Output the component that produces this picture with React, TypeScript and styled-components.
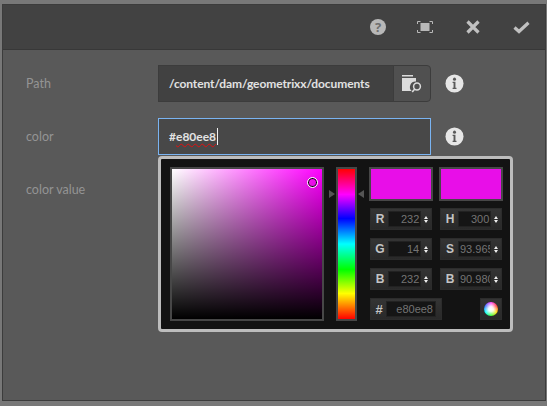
import React from "react";
import styled, { createGlobalStyle } from "styled-components";

const Global = createGlobalStyle`
  html, body { margin: 0; padding: 0; background: #787878; }
  body { width: 547px; height: 406px; overflow: hidden; font-family: Lato, "Open Sans", "Liberation Sans", sans-serif; }
`;

const Page = styled.div`
  width: 547px;
  height: 406px;
  padding: 4px 1px 5px 2px;
  box-sizing: border-box;
`;
const Dialog = styled.div`
  height: 100%;
  box-sizing: border-box;
  border: 1px solid #3c3c3c;
  background: #595959;
  display: flex;
  flex-direction: column;
`;
const Toolbar = styled.div`
  height: 45px;
  flex: none;
  box-sizing: border-box;
  background: #424242;
  border-bottom: 1px solid #383838;
  display: flex;
  justify-content: flex-end;
`;
const ToolButton = styled.div`
  width: 48px;
  display: flex;
  align-items: center;
  justify-content: center;
`;
const HelpIcon = styled.span`
  width: 16px;
  height: 16px;
  margin-left: 2px;
  border-radius: 50%;
  background: #b8b8b8;
  color: #6e6e6e;
  font: bold 13px/16px "Open Sans", sans-serif;
  text-align: center;
`;
const Body = styled.div`
  flex: 1;
  padding: 15px 0 0 23px;
  display: flex;
  flex-direction: column;
  gap: 16px;
`;
const Row = styled.div`
  display: flex;
  align-items: center;
  height: 37px;
`;
const Label = styled.div`
  width: 132px;
  font-size: 12.5px;
  color: #949494;
`;
const Field = styled.div`
  position: relative;
  width: 273px;
  height: 37px;
  display: flex;
`;
const PathInput = styled.div`
  flex: 1;
  box-sizing: border-box;
  background: #414141;
  border: 1px solid #3c3c3c;
  color: #e2e2e2;
  font-size: 12px;
  font-weight: 700;
  letter-spacing: -0.1px;
  line-height: 35px;
  padding-left: 10px;
  white-space: nowrap;
`;
const BrowseButton = styled.div`
  width: 38px;
  box-sizing: border-box;
  background: #505050;
  border: 1px solid #3c3c3c;
  margin-left: -1px;
  border-radius: 0 4px 4px 0;
  display: flex;
  align-items: center;
  justify-content: center;
`;
const ColorInput = styled.div`
  flex: 1;
  box-sizing: border-box;
  background: #484848;
  border: 1px solid #7ab4f2;
  color: #e2e2e2;
  font-size: 12px;
  font-weight: 700;
  line-height: 35px;
  padding-left: 10px;
  display: flex;
  align-items: center;
`;
const Squiggle = styled.span`
  text-decoration: underline wavy #e01010 1px;
  text-underline-offset: 2px;
`;
const Caret = styled.span`
  width: 1px;
  height: 17px;
  background: #f0f0f0;
  margin-left: 1px;
`;
const InfoSlot = styled.div`
  width: 47px;
  display: flex;
  justify-content: center;
`;
const Picker = styled.div`
  position: absolute;
  left: 0;
  top: 38px;
  width: 355px;
  height: 176px;
  box-sizing: border-box;
  background: #131313;
  border: 3px solid #bdbdbd;
  border-radius: 4px;
  padding: 8px 0 0 9px;
  display: flex;
  z-index: 2;
`;
const SvSquare = styled.div`
  position: relative;
  width: 154px;
  height: 154px;
  box-sizing: border-box;
  border: 2px solid #474747;
  background: linear-gradient(to top, #000, rgba(0, 0, 0, 0)),
    linear-gradient(to right, #fff, #f0f);
`;
const SvMarker = styled.div`
  position: absolute;
  left: 135px;
  top: 8px;
  width: 9px;
  height: 9px;
  border-radius: 50%;
  border: 1px solid #fff;
  box-shadow: inset 0 0 0 1px #000;
`;
const HueWrap = styled.div`
  position: relative;
  width: 21px;
  margin: 0 12px;
`;
const HueBar = styled.div`
  width: 21px;
  height: 154px;
  box-sizing: border-box;
  border: 2px solid #474747;
  background: linear-gradient(to bottom, #f00, #f0f 17%, #00f 33%, #0ff 50%, #0f0 67%, #ff0 83%, #f00);
`;
const Arrow = styled.div<{ $side: "left" | "right" }>`
  position: absolute;
  top: 23px;
  width: 0;
  height: 0;
  border-top: 4.5px solid transparent;
  border-bottom: 4.5px solid transparent;
  ${(p) =>
    p.$side === "left"
      ? "left: -7px; border-left: 6px solid #555;"
      : "right: -7px; border-right: 6px solid #555;"}
`;
const Side = styled.div`
  width: 134px;
  display: flex;
  flex-direction: column;
`;
const Swatches = styled.div`
  display: flex;
  gap: 6px;
  margin-bottom: 7px;
`;
const Swatch = styled.div`
  width: 64px;
  height: 34px;
  box-sizing: border-box;
  border: 2px solid #474747;
  background: #e80ee8;
`;
const Grid = styled.div`
  display: grid;
  grid-template-columns: 62px 62px;
  grid-auto-rows: 22px;
  gap: 8px;
  padding-left: 1px;
`;
const Box = styled.div`
  box-sizing: border-box;
  height: 22px;
  background: linear-gradient(to bottom, #343434, #292929);
  border: 1px solid #2c2c2c;
  display: flex;
  align-items: center;
  position: relative;
`;
const BoxLetter = styled.span`
  width: 18px;
  flex: none;
  text-align: center;
  font: bold 12px "Liberation Sans", Arial, sans-serif;
  color: #c4c4c4;
`;
const BoxValue = styled.div`
  width: 32px;
  height: 14px;
  box-sizing: border-box;
  background: #151515;
  box-shadow: 0 0 0 1px #222;
  color: #747474;
  font: 11px/14px "Liberation Sans", Arial, sans-serif;
  text-align: right;
  padding-right: 1px;
  overflow: hidden;
  white-space: nowrap;
`;
const ClippedValue = styled(BoxValue)`
  text-align: left;
  padding: 0 0 0 1px;
`;
const Spin = styled.div`
  width: 10px;
  display: flex;
  flex-direction: column;
  align-items: center;
  gap: 1px;
  margin-left: 1px;
`;
const SpinTip = styled.div<{ $up?: boolean }>`
  width: 0;
  height: 0;
  border-left: 2.5px solid transparent;
  border-right: 2.5px solid transparent;
  ${(p) => (p.$up ? "border-bottom: 3px solid #eee;" : "border-top: 3px solid #eee;")}
`;
const BottomRow = styled.div`
  display: flex;
  justify-content: space-between;
  margin: 8px 0 0 1px;
  width: 132px;
`;
const HexBox = styled(Box)`
  width: 72px;
`;
const HexLetter = styled(BoxLetter)`
  width: 16px;
  font-size: 13px;
`;
const HexValue = styled(BoxValue)`
  width: 48px;
  padding-right: 2px;
`;
const WheelBox = styled(Box)`
  width: 22px;
  justify-content: center;
`;
const Wheel = styled.div`
  width: 14px;
  height: 14px;
  border-radius: 50%;
  background: radial-gradient(circle, #fff 0, rgba(255, 255, 255, 0.9) 25%, rgba(255, 255, 255, 0) 70%),
    conic-gradient(#f4f, #f33, #fd0, #3f3, #0ff, #36f, #f4f);
`;

const Info = () => (
  <svg width="19" height="19" viewBox="0 0 20 20">
    <circle cx="10" cy="10" r="9.500" fill="#e6e6e6" />
    <circle cx="10" cy="5.400" r="1.600" fill="#595959" />
    <path d="M8 8.200h3v6.400h1.100v1.200H8v-1.200h1v-5.200H8z" fill="#595959" />
  </svg>
);

const channels: [string, string, string, string][] = [
  ["R", "232", "H", "300"],
  ["G", "14", "S", "93.965"],
  ["B", "232", "B", "90.980"],
];

const Channel = ({ letter, value }: { letter: string; value: string }) => {
  const Value = value.length > 4 ? ClippedValue : BoxValue;
  return (
    <Box>
      <BoxLetter>{letter}</BoxLetter>
      <Value>{value}</Value>
      <Spin>
        <SpinTip $up />
        <SpinTip />
      </Spin>
    </Box>
  );
};

export default function App() {
  return (
    <Page>
      <Global />
      <Dialog>
        <Toolbar>
          <ToolButton>
            <HelpIcon>?</HelpIcon>
          </ToolButton>
          <ToolButton>
            <svg width="16" height="12" viewBox="0 0 16 12" fill="none">
              <rect x="3.500" y="2" width="9" height="8" fill="#b8b8b8" />
              <path d="M.5 3V.5h3M12.500.5h3V3M15.500 9v2.500h-3M3.500 11.500h-3V9" stroke="#b8b8b8" strokeWidth="1" />
            </svg>
          </ToolButton>
          <ToolButton>
            <svg width="14" height="14" viewBox="0 0 14 14">
              <path d="M1.500 1.500l11 11M12.500 1.500l-11 11" stroke="#c0c0c0" strokeWidth="3.200" />
            </svg>
          </ToolButton>
          <ToolButton>
            <svg width="17" height="13" viewBox="0 0 17 13" fill="none">
              <path d="M1.500 6.500l4.500 4L15.500 1.800" stroke="#c0c0c0" strokeWidth="3.200" />
            </svg>
          </ToolButton>
        </Toolbar>
        <Body>
          <Row>
            <Label>Path</Label>
            <Field>
              <PathInput>/content/dam/geometrixx/documents</PathInput>
              <BrowseButton>
                <svg width="20" height="18" viewBox="0 0 20 18">
                  <path d="M0 0h11v1.500H0z" fill="#dcdcdc" />
                  <path d="M0 3h14v3.500a5.500 5.500 0 0 0-4.300 9.500H0z" fill="#dcdcdc" />
                  <circle cx="15" cy="11.500" r="3.400" fill="none" stroke="#dcdcdc" strokeWidth="1.500" />
                  <path d="M12.800 14l-2.600 3" stroke="#dcdcdc" strokeWidth="1.600" />
                </svg>
              </BrowseButton>
            </Field>
            <InfoSlot>
              <Info />
            </InfoSlot>
          </Row>
          <Row>
            <Label>color</Label>
            <Field>
              <ColorInput>
                #<Squiggle>e80ee8</Squiggle>
                <Caret />
              </ColorInput>
              <Picker>
                <SvSquare>
                  <SvMarker />
                </SvSquare>
                <HueWrap>
                  <HueBar />
                  <Arrow $side="left" />
                  <Arrow $side="right" />
                </HueWrap>
                <Side>
                  <Swatches>
                    <Swatch />
                    <Swatch />
                  </Swatches>
                  <Grid>
                    {channels.map(([a, av, b, bv]) => (
                      <React.Fragment key={a + b + av}>
                        <Channel letter={a} value={av} />
                        <Channel letter={b} value={bv} />
                      </React.Fragment>
                    ))}
                  </Grid>
                  <BottomRow>
                    <HexBox>
                      <HexLetter>#</HexLetter>
                      <HexValue>e80ee8</HexValue>
                    </HexBox>
                    <WheelBox>
                      <Wheel />
                    </WheelBox>
                  </BottomRow>
                </Side>
              </Picker>
            </Field>
            <InfoSlot>
              <Info />
            </InfoSlot>
          </Row>
          <Row>
            <Label>color value</Label>
          </Row>
        </Body>
      </Dialog>
    </Page>
  );
}
